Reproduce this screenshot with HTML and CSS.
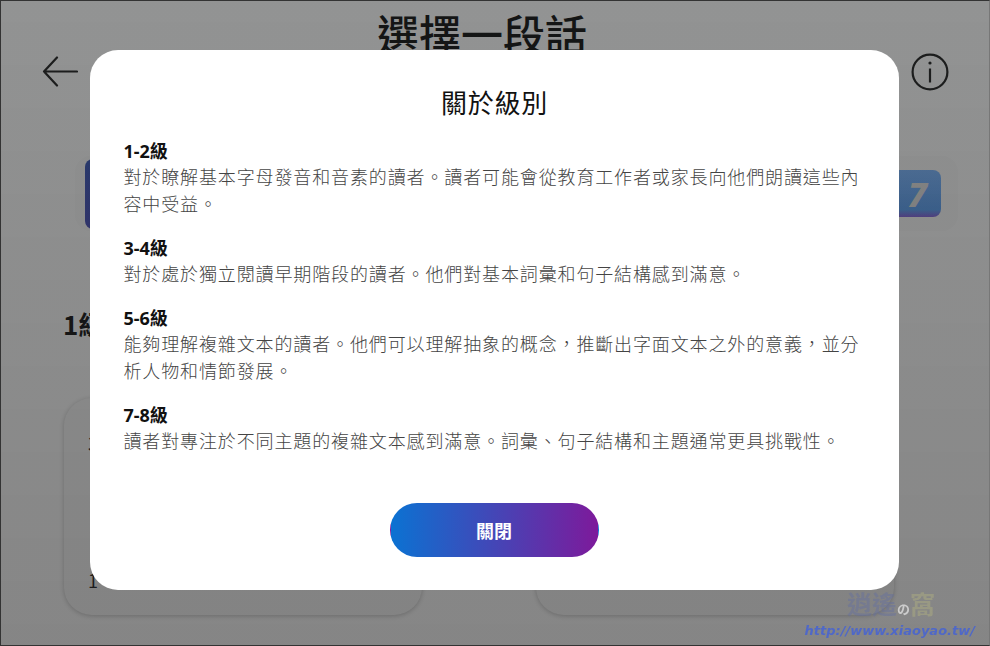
FILE: index.html
```html
<!DOCTYPE html>
<html lang="zh-Hant">
<head>
    <meta charset="UTF-8">
    <meta name="viewport" content="width=device-width, initial-scale=1.0">
    <title>選擇一段話</title>
    <link rel="stylesheet" href="styles.css">
</head>
<body>
    <div class="page">
        <!-- Encabezado -->
        <header class="top-bar">
            <svg class="icon-back" width="36" height="31" viewBox="0 0 36 31" fill="none" stroke="#111" stroke-width="2.2" stroke-linecap="round" stroke-linejoin="round">
                <path d="M35 15.500H2M15 1.500L2 15.500l13 14"/>
            </svg>
            <h1>選擇一段話</h1>
            <svg class="icon-info" width="38" height="38" viewBox="0 0 38 38" fill="none" stroke="#111" stroke-width="2.200">
                <circle cx="19" cy="19" r="17.400"/>
                <path d="M19 15.500v14"/>
                <circle cx="19" cy="10" r="1.600" fill="#111" stroke="none"/>
            </svg>
        </header>

        <!-- Niveles -->
        <div class="levels">
            <div class="level"></div>
            <div class="level level-last">7</div>
        </div>

        <h2 class="section-title">1級</h2>
        <div class="cards">
            <div class="card">
                <span>3</span>
                <span>1</span>
            </div>
            <div class="card"></div>
        </div>
    </div>

    <!-- Modal -->
    <div class="overlay">
        <div class="modal">
            <h3 class="modal-title">關於級別</h3>
            <div class="modal-body">
                <section class="info">
                    <h4>1-2級</h4>
                    <p>對於瞭解基本字母發音和音素的讀者。讀者可能會從教育工作者或家長向他們朗讀這些內容中受益。</p>
                </section>
                <section class="info">
                    <h4>3-4級</h4>
                    <p>對於處於獨立閱讀早期階段的讀者。他們對基本詞彙和句子結構感到滿意。</p>
                </section>
                <section class="info">
                    <h4>5-6級</h4>
                    <p>能夠理解複雜文本的讀者。他們可以理解抽象的概念，推斷出字面文本之外的意義，並分析人物和情節發展。</p>
                </section>
                <section class="info">
                    <h4>7-8級</h4>
                    <p>讀者對專注於不同主題的複雜文本感到滿意。詞彙、句子結構和主題通常更具挑戰性。</p>
                </section>
            </div>
            <button class="close-btn">關閉</button>
        </div>
    </div>

    <div class="watermark">
        <div class="wm-name">逍遙<small>の</small><em>窩</em></div>
        <div class="wm-url">http://www.xiaoyao.tw/</div>
    </div>
</body>
</html>
```

FILE: styles.css
```css
* {
    box-sizing: border-box;
}

html, body {
    margin: 0;
    height: 100%;
    overflow: hidden;
}

body {
    font-family: "Noto Sans CJK TC", "Noto Sans", sans-serif;
    color: #111;
}

.page {
    height: 646px;
    padding: 0 32px 0 64px;
    background-color: #fdfdfd;
    overflow: hidden;
}

/* Encabezado */
.top-bar {
    display: grid;
    grid-template-columns: 38px 1fr 38px;
    height: 91px;
    margin-left: -22px;
    margin-right: 9px;
}

.top-bar h1 {
    margin: 0;
    padding-right: 27px;
    color: #000;
    font-size: 42px;
    font-weight: 500;
    line-height: 66px;
    text-align: center;
}

.icon-back {
    margin-top: 56px;
}

.icon-info {
    margin-top: 53px;
}

/* Niveles */
.levels {
    display: flex;
    justify-content: space-between;
    align-items: center;
    width: 883px;
    height: 75px;
    margin: 65px 0 0 11px;
    padding: 0 17px 0 10px;
    background-color: #f8f8f8;
    border-radius: 16px;
}

.level {
    width: 66px;
    height: 70px;
    border-radius: 8px;
    background: linear-gradient(180deg, #2a4ab0, #3a40b0);
}

.level-last {
    display: flex;
    align-items: center;
    justify-content: flex-end;
    height: 47px;
    padding-right: 14px;
    background: linear-gradient(180deg, #70b0ff 0%, #4f98f0 85%, #7a55d8 100%);
    color: #ddd;
    font-family: "Noto Sans", sans-serif;
    font-size: 34px;
    font-style: italic;
    font-weight: 800;
}

.section-title {
    margin: 73px 0 0 -1px;
    color: #000;
    font-size: 26px;
    font-weight: 700;
    line-height: 40px;
}

.cards {
    display: flex;
    gap: 114px;
    margin-top: 54px;
}

.card {
    display: flex;
    flex-direction: column;
    justify-content: space-between;
    width: 358px;
    height: 217px;
    padding: 32px 24px 22px;
    background-color: #f7f7f7;
    border-radius: 28px;
    box-shadow: 0 1px 5px rgba(0, 0, 0, 0.25);
    font-size: 18px;
}

/* Modal */
.overlay {
    position: fixed;
    inset: 0;
    display: flex;
    align-items: center;
    justify-content: center;
    background: linear-gradient(180deg, rgba(40, 42, 42, 0.5), rgba(40, 40, 40, 0.56));
    border: 1px solid #333;
    border-right-color: #777;
}

.modal {
    display: flex;
    flex-direction: column;
    align-items: center;
    width: 809px;
    height: 540px;
    padding: 32px 34px 33px;
    background-color: #fff;
    border-radius: 28px;
    position: relative;
    top: -3px;
    left: -1px;
}

.modal-title {
    margin: 0 0 16px;
    padding-left: 1px;
    font-size: 26px;
    font-weight: 400;
    letter-spacing: 0.7px;
    line-height: 40px;
    text-align: center;
}

.modal-body {
    width: 100%;
    flex: 1;
}

.info {
    margin-bottom: 18px;
}

.info h4 {
    margin: 0 0 -1px;
    color: #111;
    font-family: "Noto Sans", "Noto Sans CJK TC", sans-serif;
    font-size: 18px;
    font-weight: 700;
    line-height: 26px;
}

.info p {
    margin: 0;
    color: #444;
    font-size: 18px;
    font-weight: 300;
    letter-spacing: 0.87px;
    line-height: 27px;
}

.close-btn {
    width: 209px;
    height: 54px;
    border: 1px solid transparent;
    border-radius: 27px;
    background: linear-gradient(90deg, #0b72d2, #7d1a9b);
    color: #fff;
    font-family: inherit;
    font-size: 18px;
    font-weight: 700;
}

/* Marca de agua */
.watermark {
    position: fixed;
    right: 15px;
    bottom: 8px;
    text-align: right;
    pointer-events: none;
}

.wm-name {
    padding-right: 40px;
    color: rgba(100, 110, 160, 0.45);
    font-size: 25px;
    font-weight: 700;
    line-height: 28px;
}

.wm-name small {
    color: #ccc;
    font-size: 13px;
}

.wm-name em {
    color: rgba(170, 170, 130, 0.55);
    font-style: normal;
}

.wm-url {
    color: #4f68c8;
    font-family: "DejaVu Sans", sans-serif;
    font-size: 13px;
    font-style: italic;
    font-weight: 700;
    line-height: 15px;
}
```
